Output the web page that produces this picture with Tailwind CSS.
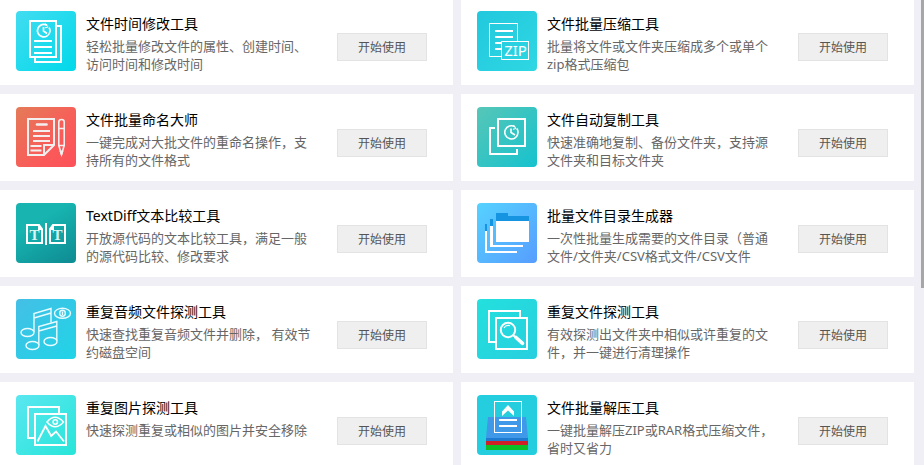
<!DOCTYPE html>
<html lang="zh-CN">
<head>
<meta charset="utf-8">
<meta name="viewport" content="width=device-width, initial-scale=1">
<title>文件工具</title>
<script src="https://cdn.jsdelivr.net/npm/@tailwindcss/browser@4"></script>
</head>
<body class="flex h-screen overflow-hidden bg-[#f0eff5] font-['Noto_Sans','Noto_Sans_CJK_SC',sans-serif]">
<main class="-mt-0.5 mr-[7px] grid flex-1 grid-cols-2 content-start gap-x-2 gap-y-[9px]">

<article class="flex h-[87px] items-start bg-white pt-[13px] pr-[26px] pl-4">
  <svg class="size-[60px] shrink-0 rounded" viewBox="0 0 60 60" fill="none" stroke="#fff" stroke-width="2" aria-hidden="true">
    <defs><linearGradient id="g1" x1="0" y1="0" x2="1" y2="1"><stop stop-color="#43dcf0"/><stop offset="1" stop-color="#00d9ea"/></linearGradient></defs>
    <rect width="60" height="60" fill="url(#g1)" stroke="none"/>
    <path d="M14 10h26v36H14zM41 15h4v36H19v-4M18 30h18M18 36h18M18 42h18"/>
    <path d="M31 14.200A6.300 6.300 0 1 0 34 20.500a6 6 0 0 0-1-4M27.500 16v4l3.500 2.500" stroke-width="1.700"/><path d="M29.500 12.500l2.500 3.500-3 .8" stroke-width="1"/>
  </svg>
  <div class="mr-5 ml-2.5 flex-1">
    <h2 class="text-[14px] leading-[26px] text-black">文件时间修改工具</h2>
    <p class="text-[13px] leading-[18px] text-[#666]">轻松批量修改文件的属性、创建时间、访问时间和修改时间</p>
  </div>
  <button class="mt-[22px] h-7 w-[90px] shrink-0 border border-[#e3e3e3] bg-[#efefef] pt-0.5 text-[12px] leading-4 text-[#555]">开始使用</button>
</article>

<article class="flex h-[87px] items-start bg-white pt-[13px] pr-[26px] pl-4">
  <svg class="size-[60px] shrink-0 rounded" viewBox="0 0 60 60" fill="none" stroke="#fff" aria-hidden="true">
    <defs><linearGradient id="g2" x1="0" y1="0" x2="1" y2="1"><stop stop-color="#22c8dd"/><stop offset="1" stop-color="#2fd7e3"/></linearGradient></defs>
    <rect width="60" height="60" fill="url(#g2)" stroke="none"/>
    <path d="M24.500 45.500h-12v-33h28v18"/>
    <path d="M18 20h18M18 26h18M18 32h6M18 38h6" stroke-width="2"/>
    <rect x="24.500" y="30.500" width="27" height="18"/>
    <text x="38.500" y="45" text-anchor="middle" font-size="15" fill="#fff" stroke="none" font-family="Noto Sans, sans-serif">ZIP</text>
  </svg>
  <div class="mr-5 ml-2.5 flex-1">
    <h2 class="text-[14px] leading-[26px] text-black">文件批量压缩工具</h2>
    <p class="text-[13px] leading-[18px] text-[#666]">批量将文件或文件夹压缩成多个或单个zip格式压缩包</p>
  </div>
  <button class="mt-[22px] h-7 w-[90px] shrink-0 border border-[#e3e3e3] bg-[#efefef] pt-0.5 text-[12px] leading-4 text-[#555]">开始使用</button>
</article>

<article class="flex h-[87px] items-start bg-white pt-[13px] pr-[26px] pl-4">
  <svg class="size-[60px] shrink-0 rounded" viewBox="0 0 60 60" fill="none" stroke="#f4efef" stroke-width="2" aria-hidden="true">
    <defs><linearGradient id="g3" x1="0" y1="0" x2="1" y2="1"><stop stop-color="#e47b58"/><stop offset=".65" stop-color="#fa5a59"/><stop offset="1" stop-color="#fc5159"/></linearGradient></defs>
    <rect width="60" height="60" fill="url(#g3)" stroke="none"/>
    <path d="M28 48H12V12h26v26zM28 48v-10H38"/>
    <path d="M21 17.500h9.500" stroke-width="2.600" stroke-linecap="round"/>
    <path d="M17 24h17M17 29h17M17 34h17M14.500 39h11M14.500 43.500h11"/>
    <path d="M42.800 38.500V15q0-2.500 2.700-2.500t2.700 2.500v23.500zM42.800 21.500h5.400M42.800 38.500l2.700 9 2.700-9" stroke-width="1.600"/>
    <path d="M44 44l1.500 4.500L47 44z" fill="#f4efef" stroke-width="1"/>
  </svg>
  <div class="mr-5 ml-2.5 flex-1">
    <h2 class="text-[14px] leading-[26px] text-black">文件批量命名大师</h2>
    <p class="text-[13px] leading-[18px] text-[#666]">一键完成对大批文件的重命名操作，支持所有的文件格式</p>
  </div>
  <button class="mt-[22px] h-7 w-[90px] shrink-0 border border-[#e3e3e3] bg-[#efefef] pt-0.5 text-[12px] leading-4 text-[#555]">开始使用</button>
</article>

<article class="flex h-[87px] items-start bg-white pt-[13px] pr-[26px] pl-4">
  <svg class="size-[60px] shrink-0 rounded" viewBox="0 0 60 60" fill="none" stroke="#fff" stroke-width="2" aria-hidden="true">
    <defs><linearGradient id="g4" x1="0" y1="0" x2="1" y2="1"><stop stop-color="#57c6b7"/><stop offset="1" stop-color="#15c2ce"/></linearGradient></defs>
    <rect width="60" height="60" fill="url(#g4)" stroke="none"/>
    <path d="M21 12h27v27H21zM18 21h-5v26h27v-5"/>
    <path d="M38 19.800A6.600 6.600 0 1 0 41 25.500a6 6 0 0 0-1.200-4M34 21.500v4l4 2.500" stroke-width="1.600"/><path d="M36.500 18l2.500 3.500-3 .8" stroke-width="1"/>
  </svg>
  <div class="mr-5 ml-2.5 flex-1">
    <h2 class="text-[14px] leading-[26px] text-black">文件自动复制工具</h2>
    <p class="text-[13px] leading-[18px] text-[#666]">快速准确地复制、备份文件夹，支持源文件夹和目标文件夹</p>
  </div>
  <button class="mt-[22px] h-7 w-[90px] shrink-0 border border-[#e3e3e3] bg-[#efefef] pt-0.5 text-[12px] leading-4 text-[#555]">开始使用</button>
</article>

<article class="flex h-[87px] items-start bg-white pt-[13px] pr-[26px] pl-4">
  <svg class="size-[60px] shrink-0 rounded" viewBox="0 0 60 60" fill="none" stroke="#fff" stroke-width="2" aria-hidden="true">
    <defs><linearGradient id="g5" x1=".2" y1="0" x2=".8" y2="1"><stop offset=".3" stop-color="#17b4b0"/><stop offset="1" stop-color="#0f8f95"/></linearGradient></defs>
    <rect width="60" height="60" fill="url(#g5)" stroke="none"/>
    <path d="M11 22h12l3 4v14H11zM49 22H37l-3 4v14h15zM30 20v22"/>
    <path d="M22 21l5 6h-5zM38 21l-5 6h5z" fill="#fff" stroke="none"/>
    <g font-size="15" font-weight="bold" text-anchor="middle" fill="#d8f5f3" stroke="none" font-family="Liberation Serif, serif"><text x="18.500" y="37">T</text><text x="41.500" y="37">T</text></g>
  </svg>
  <div class="mr-5 ml-2.5 flex-1">
    <h2 class="text-[14px] leading-[26px] text-black">TextDiff文本比较工具</h2>
    <p class="text-[13px] leading-[18px] text-[#666]">开放源代码的文本比较工具，满足一般的源代码比较、修改要求</p>
  </div>
  <button class="mt-[22px] h-7 w-[90px] shrink-0 border border-[#e3e3e3] bg-[#efefef] pt-0.5 text-[12px] leading-4 text-[#555]">开始使用</button>
</article>

<article class="flex h-[87px] items-start bg-white pt-[13px] pr-[26px] pl-4">
  <svg class="size-[60px] shrink-0 rounded" viewBox="0 0 60 60" aria-hidden="true">
    <defs><linearGradient id="g6" x1="0" y1="0" x2="1" y2="1"><stop stop-color="#55d2ff"/><stop offset="1" stop-color="#579dff"/></linearGradient></defs>
    <rect width="60" height="60" fill="url(#g6)"/>
    <path d="M19 10h12v3h21v5H19zM13 16h3v7h-3zM8 21h2v7H8z" fill="#1594e1"/>
    <path d="M19 18h33v21H19zM13 23h3v19h30v2H13zM8 28h2v20h30v2H8z" fill="#fff"/>
  </svg>
  <div class="mr-5 ml-2.5 flex-1">
    <h2 class="text-[14px] leading-[26px] text-black">批量文件目录生成器</h2>
    <p class="text-[13px] leading-[18px] text-[#666]">一次性批量生成需要的文件目录（普通文件/文件夹/CSV格式文件/CSV文件</p>
  </div>
  <button class="mt-[22px] h-7 w-[90px] shrink-0 border border-[#e3e3e3] bg-[#efefef] pt-0.5 text-[12px] leading-4 text-[#555]">开始使用</button>
</article>

<article class="flex h-[87px] items-start bg-white pt-[13px] pr-[26px] pl-4">
  <svg class="size-[60px] shrink-0 rounded" viewBox="0 0 60 60" fill="none" stroke="#e9fbff" stroke-width="1.400" aria-hidden="true">
    <defs><linearGradient id="g7" x1="0" y1="0" x2="1" y2="1"><stop stop-color="#44bfe5"/><stop offset="1" stop-color="#20d4e7"/></linearGradient></defs>
    <rect width="60" height="60" fill="url(#g7)" stroke="none"/>
    <ellipse cx="11.500" cy="33.500" rx="6.500" ry="4"/>
    <path d="M18 33V14.500l17-5v14M18 19l17-5"/>
    <ellipse cx="16.500" cy="46.500" rx="6.500" ry="4"/><ellipse cx="34.500" cy="42.500" rx="6.500" ry="4"/>
    <path d="M22.800 46V27.500l18-5V42M22.800 32l18-5"/>
    <ellipse cx="46.500" cy="14.300" rx="8" ry="5"/><ellipse cx="46.500" cy="14.300" rx="2.800" ry="3"/><path d="M46.500 12.500v3.500"/>
  </svg>
  <div class="mr-5 ml-2.5 flex-1">
    <h2 class="text-[14px] leading-[26px] text-black">重复音频文件探测工具</h2>
    <p class="text-[13px] leading-[18px] text-[#666]">快速查找重复音频文件并删除， 有效节约磁盘空间</p>
  </div>
  <button class="mt-[22px] h-7 w-[90px] shrink-0 border border-[#e3e3e3] bg-[#efefef] pt-0.5 text-[12px] leading-4 text-[#555]">开始使用</button>
</article>

<article class="flex h-[87px] items-start bg-white pt-[13px] pr-[26px] pl-4">
  <svg class="size-[60px] shrink-0 rounded" viewBox="0 0 60 60" fill="none" stroke="#fff" stroke-width="2" aria-hidden="true">
    <defs><linearGradient id="g8" x1="0" y1="0" x2="1" y2="1"><stop stop-color="#23e0dd"/><stop offset="1" stop-color="#28cfdf"/></linearGradient></defs>
    <rect width="60" height="60" fill="url(#g8)" stroke="none"/>
    <path d="M18 43h-6V12h31v6M19 19h31v31H19z"/>
    <circle cx="31" cy="31" r="7.200" stroke-width="2"/><path d="M27 29q2-3.500 6-2.300" stroke-width="1.200"/>
    <path d="M36.500 36.500l3 2.500" stroke-width="2"/><path d="M39 38.500l6.500 5.800" stroke-width="3.600" stroke-linecap="round"/>
  </svg>
  <div class="mr-5 ml-2.5 flex-1">
    <h2 class="text-[14px] leading-[26px] text-black">重复文件探测工具</h2>
    <p class="text-[13px] leading-[18px] text-[#666]">有效探测出文件夹中相似或许重复的文件，并一键进行清理操作</p>
  </div>
  <button class="mt-[22px] h-7 w-[90px] shrink-0 border border-[#e3e3e3] bg-[#efefef] pt-0.5 text-[12px] leading-4 text-[#555]">开始使用</button>
</article>

<article class="flex h-[87px] items-start bg-white pt-[13px] pr-[26px] pl-4">
  <svg class="size-[60px] shrink-0 rounded" viewBox="0 0 60 60" fill="none" stroke="#fff" stroke-width="2" aria-hidden="true">
    <defs><linearGradient id="g9" x1="0" y1="0" x2="1" y2="1"><stop stop-color="#5ae7f0"/><stop offset="1" stop-color="#28e5d9"/></linearGradient></defs>
    <rect width="60" height="60" fill="url(#g9)" stroke="none"/>
    <path d="M18 43h-6V12h31v6M19 19h31v31H19z"/>
    <path d="M21.500 46.500L29.500 31l5.700 10 4.800-4.500 8 10" stroke-width="1.800"/>
    <path d="M31 27q8-9.500 16.500 0-8.500 9.500-16.500 0z" stroke-width="1.500"/><circle cx="39.300" cy="27" r="2.200" stroke-width="1.500"/>
  </svg>
  <div class="mr-5 ml-2.5 flex-1">
    <h2 class="text-[14px] leading-[26px] text-black">重复图片探测工具</h2>
    <p class="text-[13px] leading-[18px] text-[#666]">快速探测重复或相似的图片并安全移除</p>
  </div>
  <button class="mt-[22px] h-7 w-[90px] shrink-0 border border-[#e3e3e3] bg-[#efefef] pt-0.5 text-[12px] leading-4 text-[#555]">开始使用</button>
</article>

<article class="flex h-[87px] items-start bg-white pt-[13px] pr-[26px] pl-4">
  <svg class="size-[60px] shrink-0 rounded" viewBox="0 0 60 60" aria-hidden="true">
    <rect width="60" height="60" fill="#25cede"/>
    <path d="M11 22h38l2 21H9z" fill="#3f98e8"/><path d="M9 43h42v3H9z" fill="#1f7bd0"/><path d="M9 46h42v4H9z" fill="#cf2027"/><path d="M9 50h42v5H9z" fill="#0cbf27"/>
    <rect x="17.500" y="6.500" width="27" height="31" fill="none" stroke="#fff"/>
    <path d="M31 10l6 6.500v4.500l-6-5.500-6 5.500v-4.500zM22 24h18v2H22zM22 30h18v2H22z" fill="#fff"/>
  </svg>
  <div class="mr-5 ml-2.5 flex-1">
    <h2 class="text-[14px] leading-[26px] text-black">文件批量解压工具</h2>
    <p class="text-[13px] leading-[18px] text-[#666]">一键批量解压ZIP或RAR格式压缩文件，省时又省力</p>
  </div>
  <button class="mt-[22px] h-7 w-[90px] shrink-0 border border-[#e3e3e3] bg-[#efefef] pt-0.5 text-[12px] leading-4 text-[#555]">开始使用</button>
</article>
</main>
<div class="w-[3px] shrink-0" aria-hidden="true"><div class="h-[62%] bg-[#a6a6a6]"></div></div>
</body>
</html>
